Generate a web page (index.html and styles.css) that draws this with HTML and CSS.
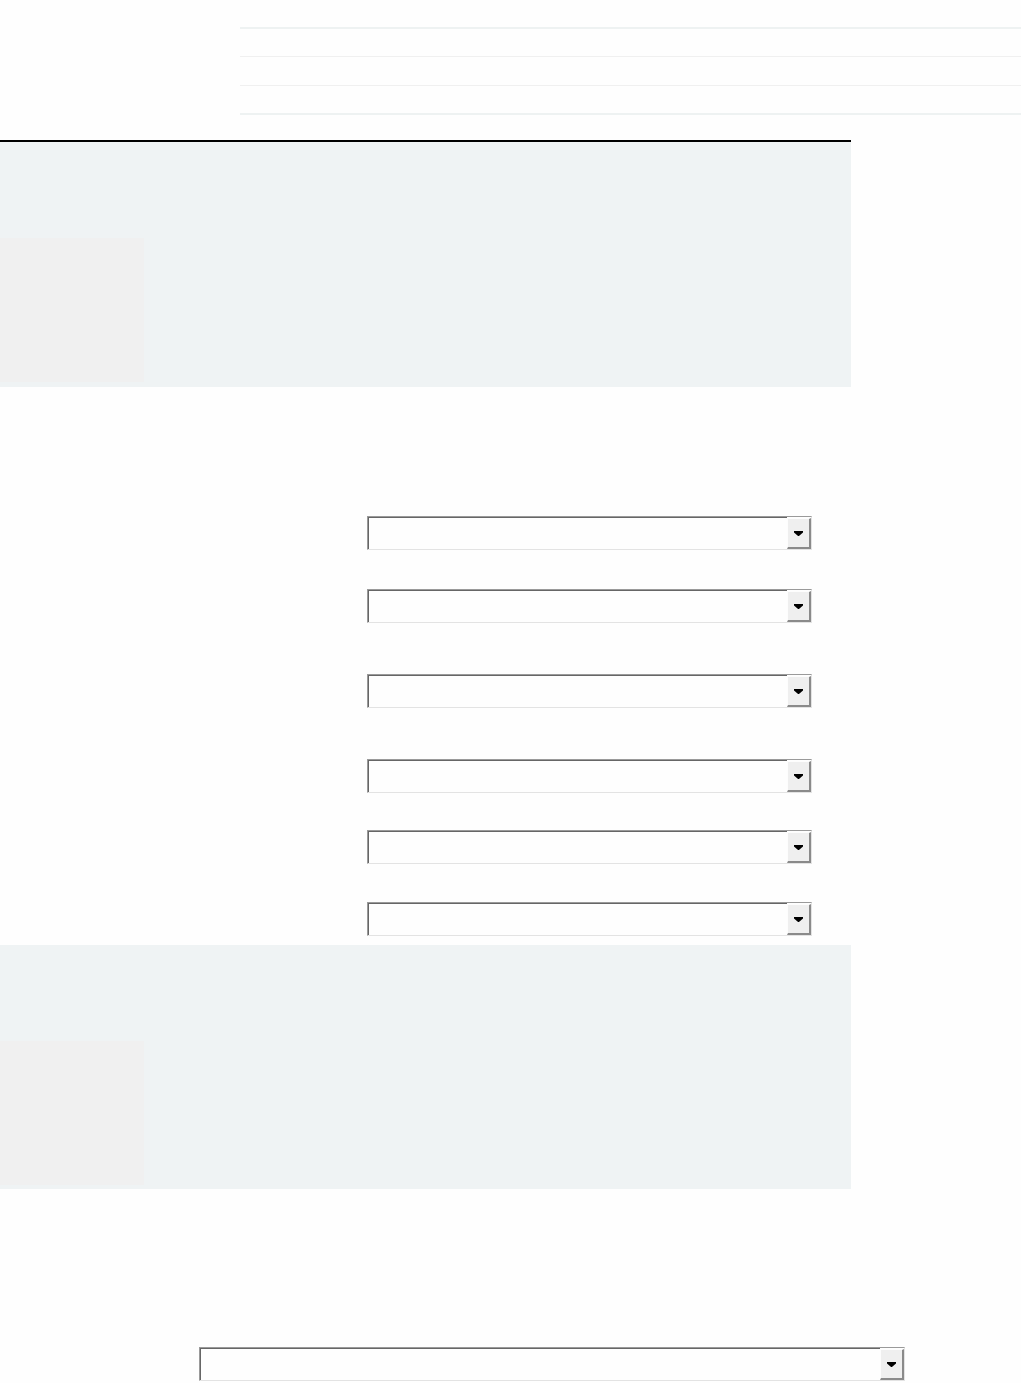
FILE: index.html
```html
<!DOCTYPE html>
<html>
<head>
<meta charset="utf-8">
<title>Form</title>
<link rel="stylesheet" href="styles.css">
</head>
<body>
<div class="page">
  <ul class="toplist">
    <li class="row r1"></li>
    <li class="row r2"></li>
    <li class="row r3"></li>
  </ul>

  <div class="rule"></div>
  <section class="panel">
    <div class="panel-box"></div>
  </section>

  <div class="form">
    <div class="select s1"><div class="field"></div><div class="btn"><span class="arrow"></span></div></div>
    <div class="select s2"><div class="field"></div><div class="btn"><span class="arrow"></span></div></div>
    <div class="select s3"><div class="field"></div><div class="btn"><span class="arrow"></span></div></div>
    <div class="select s4"><div class="field"></div><div class="btn"><span class="arrow"></span></div></div>
    <div class="select s5"><div class="field"></div><div class="btn"><span class="arrow"></span></div></div>
    <div class="select s6"><div class="field"></div><div class="btn"><span class="arrow"></span></div></div>
  </div>

  <section class="panel panel2">
    <div class="panel-box"></div>
  </section>

  <div class="bottom">
    <div class="select wide"><div class="field"></div><div class="btn"><span class="arrow"></span></div></div>
  </div>
</div>
</body>
</html>
```

FILE: styles.css
```css
html, body {
  margin: 0;
  padding: 0;
  background: #fefefe;
  font-family: "Liberation Sans", Arial, sans-serif;
}

.page {
  width: 1021px;
  height: 1383px;
  overflow: hidden;
}

.toplist {
  list-style: none;
  margin: 27px 0 0 240px;
  padding: 0;
  border-top: 2px solid #eef2f2;
  border-bottom: 2px solid #eef2f2;
}

.row {
  border-bottom: 1px solid #f0f0f0;
}
.row.r1 { height: 27px; }
.row.r2 { height: 28px; }
.row.r3 { height: 27px; border-bottom: 0; }

.rule {
  margin-top: 25px;
  width: 851px;
  height: 2px;
  background: #000;
}

.panel {
  width: 851px;
  height: 245px;
  background: #eff3f4;
  padding-top: 96px;
  box-sizing: border-box;
}

.panel2 {
  margin-top: 9px;
  height: 244px;
}

.panel-box {
  width: 144px;
  height: 144px;
  background: #f0f0f0;
}

.form {
  padding-top: 129px;
  padding-left: 367px;
  display: flex;
  flex-direction: column;
}

.select {
  box-sizing: border-box;
  width: 445px;
  height: 34px;
  border: 1px solid;
  border-color: #9a9a9a #e3e3e3 #e3e3e3 #9a9a9a;
  display: flex;
}

.field {
  flex: 1;
  background: #fefefe;
  border-top: 1px solid #666;
  border-left: 1px solid #666;
}

.btn {
  width: 24px;
  box-sizing: border-box;
  margin: 1px 0 0 0;
  background: #efefef;
  border-style: solid;
  border-width: 1px 2px 2px 1px;
  border-color: #fdfdfd #8a8a8a #8a8a8a #fdfdfd;
  display: flex;
  align-items: center;
  justify-content: center;
}

.arrow {
  width: 9px;
  height: 5px;
  background: #000;
  clip-path: polygon(0 0, 100% 0, 100% 30%, 55% 100%, 45% 100%, 0 30%);
  margin-top: 1px;
}

.s2 { margin-top: 39px; }
.s3 { margin-top: 51px; }
.s4 { margin-top: 51px; }
.s5 { margin-top: 37px; }
.s6 { margin-top: 38px; }

.bottom {
  padding-top: 158px;
  padding-left: 199px;
}

.select.wide {
  width: 706px;
}
```
